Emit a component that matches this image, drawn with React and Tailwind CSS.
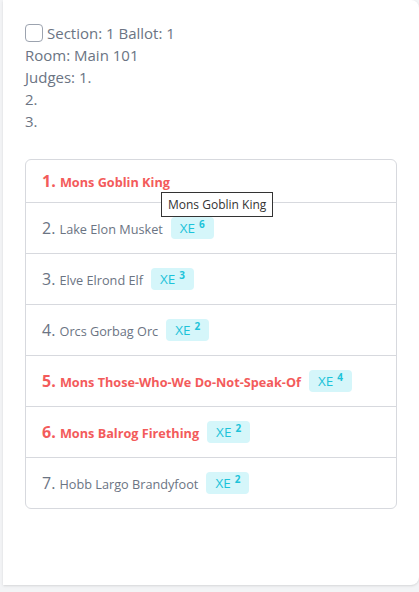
import React from 'react'

const entries = [
  { rank: 1, name: 'Mons Goblin King', red: true },
  { rank: 2, name: 'Lake Elon Musket', xe: 6 },
  { rank: 3, name: 'Elve Elrond Elf', xe: 3 },
  { rank: 4, name: 'Orcs Gorbag Orc', xe: 2 },
  { rank: 5, name: 'Mons Those-Who-We Do-Not-Speak-Of', xe: 4, red: true },
  { rank: 6, name: 'Mons Balrog Firething', xe: 2, red: true },
  { rank: 7, name: 'Hobb Largo Brandyfoot', xe: 2 },
]

const Badge = ({ n }) => (
  <span className="ml-2 inline-flex h-[22px] items-center rounded bg-[#d5f6fa] px-[9px] text-[13.5px] text-[#1cc3d9]">
    XE<span className="relative -top-[4px] ml-[4px] text-[10px] font-bold leading-none">{n}</span>
  </span>
)

const App = () => {
  return (
    <div className="min-h-[592px] bg-[#f3f4f6] pl-[3px] font-['Open_Sans',sans-serif]">
      <div className="relative h-[585px] rounded-tr-lg rounded-br-lg bg-white px-[22px] pt-[22px] shadow-sm">
        {/* ballot header */}
        <div className="text-[15px] leading-[22px] text-[#6b7483]">
          <div className="flex items-center">
            <span className="mr-[4px] inline-block h-[18px] w-[18px] rounded border border-[#9ca3af] bg-white"></span>
            Section: 1 Ballot: 1
          </div>
          <div>Room: Main 101</div>
          <div>Judges: 1.</div>
          <div>2.</div>
          <div>3.</div>
        </div>

        {/* ranking list */}
        <div className="mt-[27px] w-[372px] rounded-md border border-[#d7d9de]">
          {entries.map((e, i) => (
            <div
              key={e.rank}
              className={`flex items-center px-4 ${i > 0 ? 'border-t border-[#d7d9de] min-h-[51px]' : 'h-[42px]'}`}
            >
              {e.red ? (
                <span className="font-bold text-[#f35b5b]">
                  <span className="text-[16px]">{e.rank}.</span>{' '}
                  <span className="text-[12.7px]">{e.name}</span>
                </span>
              ) : (
                <span className="text-[#6b7483]">
                  <span className="text-[16px]">{e.rank}.</span>{' '}
                  <span className="text-[12.7px]">{e.name}</span>
                </span>
              )}
              {e.xe && <Badge n={e.xe} />}
            </div>
          ))}
        </div>

        {/* hover tooltip */}
        <div className="absolute left-[158px] top-[192px] border border-[#333] bg-white px-[6px] py-[3px] text-[12px] leading-[17px] text-[#333]">
          Mons Goblin King
        </div>
      </div>
    </div>
  )
}

export default App
